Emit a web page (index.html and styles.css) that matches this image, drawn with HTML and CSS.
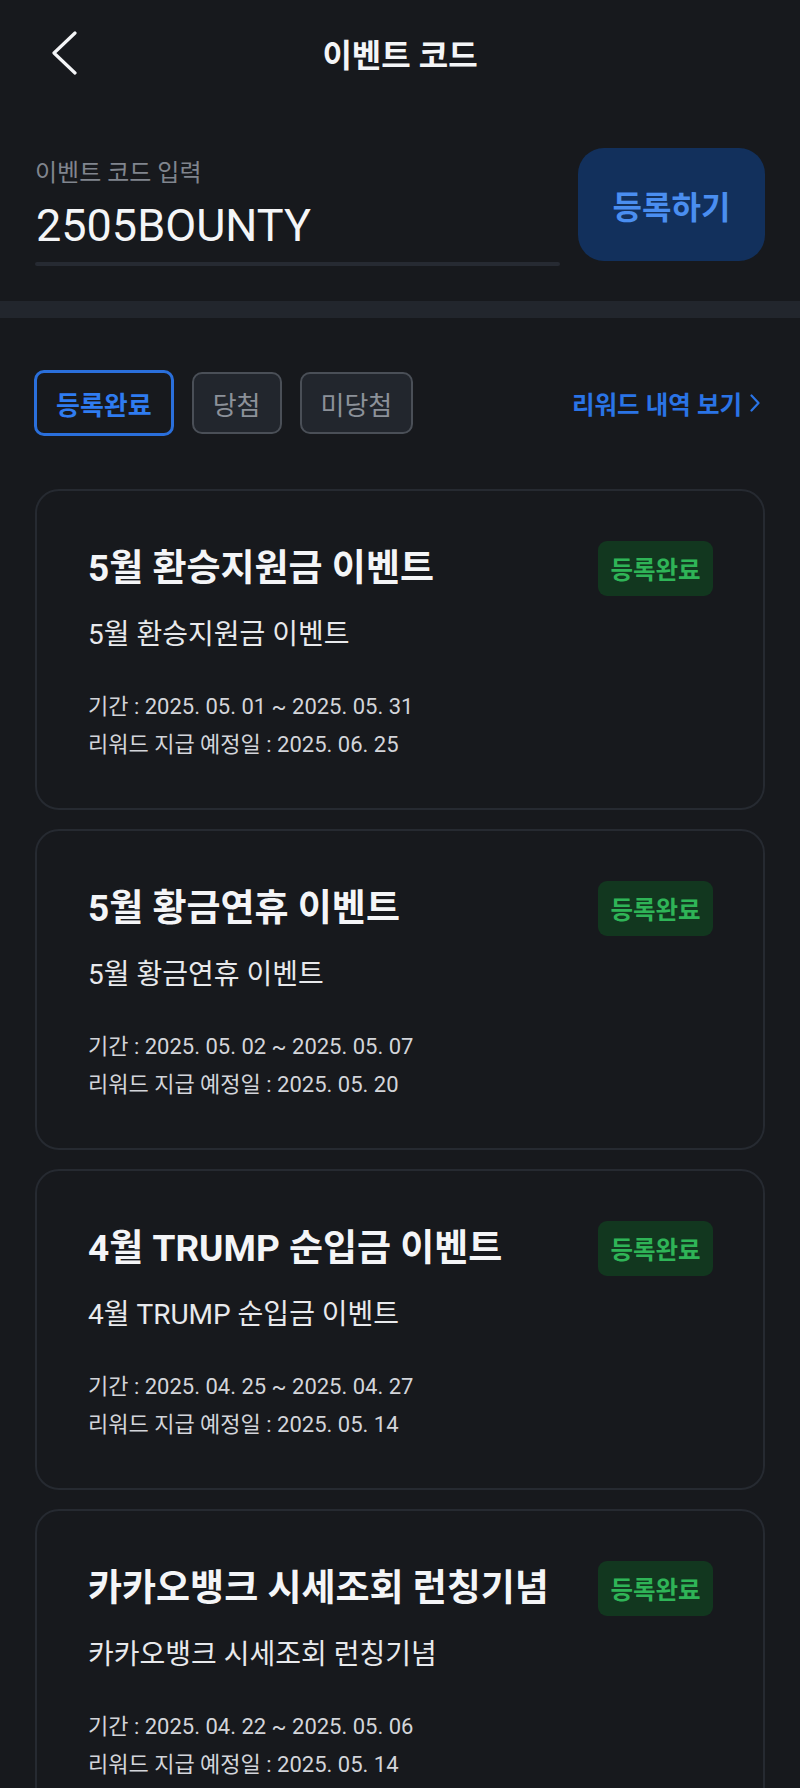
FILE: index.html
```html
<!DOCTYPE html>
<html lang="ko">
<head>
    <meta charset="UTF-8">
    <meta name="viewport" content="width=device-width, initial-scale=1.0">
    <title>이벤트 코드</title>
    <link rel="stylesheet" href="styles.css">
</head>
<body>
    <header class="top-bar">
        <div class="back">
            <svg width="26" height="44" viewBox="0 0 26 44">
                <path d="M24 2 L3 22 L24 42" fill="none" stroke="#f4f5f7" stroke-width="3.2" stroke-linecap="round" stroke-linejoin="round"/>
            </svg>
        </div>
        <h1>이벤트 코드</h1>
        <div></div>
    </header>

    <section class="code-form">
        <div class="code-field">
            <label for="codeInput">이벤트 코드 입력</label>
            <div class="code-value" id="codeInput">2505BOUNTY</div>
            <div class="code-line"></div>
        </div>
        <button class="submit-btn">등록하기</button>
    </section>

    <div class="divider"></div>

    <section class="filters">
        <div class="chips">
            <span class="chip active">등록완료</span>
            <span class="chip">당첨</span>
            <span class="chip">미당첨</span>
        </div>
        <a class="history-link">리워드 내역 보기
            <svg width="10" height="18" viewBox="0 0 10 18">
                <path d="M1.5 1.5 L8.5 9 L1.5 16.5" fill="none" stroke="#2a74e6" stroke-width="2.2" stroke-linecap="round" stroke-linejoin="round"/>
            </svg>
        </a>
    </section>

    <div class="event-list">
        <div class="event-card">
            <div class="card-head">
                <h2>5월 환승지원금 이벤트</h2>
                <span class="badge">등록완료</span>
            </div>
            <p class="card-desc">5월 환승지원금 이벤트</p>
            <p class="card-meta first">기간 : 2025. 05. 01 ~ 2025. 05. 31</p>
            <p class="card-meta">리워드 지급 예정일 : 2025. 06. 25</p>
        </div>
        <div class="event-card">
            <div class="card-head">
                <h2>5월 황금연휴 이벤트</h2>
                <span class="badge">등록완료</span>
            </div>
            <p class="card-desc">5월 황금연휴 이벤트</p>
            <p class="card-meta first">기간 : 2025. 05. 02 ~ 2025. 05. 07</p>
            <p class="card-meta">리워드 지급 예정일 : 2025. 05. 20</p>
        </div>
        <div class="event-card">
            <div class="card-head">
                <h2>4월 TRUMP 순입금 이벤트</h2>
                <span class="badge">등록완료</span>
            </div>
            <p class="card-desc">4월 TRUMP 순입금 이벤트</p>
            <p class="card-meta first">기간 : 2025. 04. 25 ~ 2025. 04. 27</p>
            <p class="card-meta">리워드 지급 예정일 : 2025. 05. 14</p>
        </div>
        <div class="event-card">
            <div class="card-head">
                <h2>카카오뱅크 시세조회 런칭기념</h2>
                <span class="badge">등록완료</span>
            </div>
            <p class="card-desc">카카오뱅크 시세조회 런칭기념</p>
            <p class="card-meta first">기간 : 2025. 04. 22 ~ 2025. 05. 06</p>
            <p class="card-meta">리워드 지급 예정일 : 2025. 05. 14</p>
        </div>
    </div>
</body>
</html>
```

FILE: styles.css
```css
body {
    margin: 0;
    background-color: #17191d;
    color: #f2f3f5;
    font-family: Roboto, "Noto Sans CJK KR", sans-serif;
}

.top-bar {
    display: grid;
    grid-template-columns: 1fr auto 1fr;
    align-items: center;
    height: 106px;
}

.back {
    padding-left: 51px;
    display: flex;
    align-items: center;
}

.top-bar h1 {
    margin: 0;
    font-size: 32px;
    font-weight: 700;
    color: #f4f5f7;
}

.code-form {
    display: flex;
    align-items: flex-start;
    gap: 18px;
    padding: 42px 35px 35px 35px;
}

.code-field {
    flex: 1;
    padding-top: 10px;
}

.code-field label {
    display: block;
    font-size: 24px;
    line-height: 30px;
    color: #80858e;
}

.code-value {
    margin-top: 12px;
    padding-left: 1px;
    font-size: 45px;
    line-height: 52px;
    color: #f4f5f7;
}

.code-line {
    margin-top: 10px;
    height: 4px;
    border-radius: 2px;
    background-color: #262a32;
}

.submit-btn {
    width: 187px;
    height: 113px;
    border: none;
    border-radius: 26px;
    background-color: #12305c;
    color: #4a8ef0;
    font-family: inherit;
    font-size: 32px;
    font-weight: 700;
}

.divider {
    height: 17px;
    background-color: #22262d;
}

.filters {
    display: flex;
    align-items: center;
    justify-content: space-between;
    padding: 52px 40px 0 34px;
}

.chips {
    display: flex;
    align-items: center;
    gap: 18px;
}

.chip {
    box-sizing: border-box;
    display: inline-flex;
    align-items: center;
    height: 62px;
    padding: 0 19px;
    border: 2px solid #4a4f57;
    border-radius: 10px;
    background-color: #22262d;
    color: #8c9199;
    font-size: 26px;
}

.chip.active {
    height: 66px;
    border: 3px solid #2a6fdb;
    background-color: transparent;
    color: #2f7cf0;
    font-weight: 700;
}

.history-link {
    display: inline-flex;
    align-items: center;
    gap: 8px;
    color: #2a74e6;
    font-size: 24.5px;
    font-weight: 700;
}

.event-list {
    display: flex;
    flex-direction: column;
    gap: 19px;
    padding: 53px 35px 0 35px;
}

.event-card {
    box-sizing: border-box;
    height: 321px;
    padding: 50px 50px 44px 51px;
    border: 2px solid #262a31;
    border-radius: 24px;
    background-color: #17191d;
}

.card-head {
    display: flex;
    align-items: center;
    justify-content: space-between;
    height: 55px;
}

.card-head h2 {
    margin: 0;
    font-size: 37px;
    line-height: 44px;
    font-weight: 700;
    color: #f4f5f7;
}

.badge {
    box-sizing: border-box;
    display: inline-flex;
    align-items: center;
    justify-content: center;
    width: 115px;
    height: 55px;
    border-radius: 9px;
    background-color: #12371f;
    color: #2fb457;
    font-size: 24.5px;
    font-weight: 700;
}

.card-desc {
    margin: 21px 0 0 0;
    font-size: 28px;
    line-height: 36px;
    color: #e8e9ec;
}

.card-meta {
    margin: 0;
    font-size: 22px;
    line-height: 38px;
    color: #d3d5da;
}

.card-meta.first {
    margin-top: 35px;
}
```
